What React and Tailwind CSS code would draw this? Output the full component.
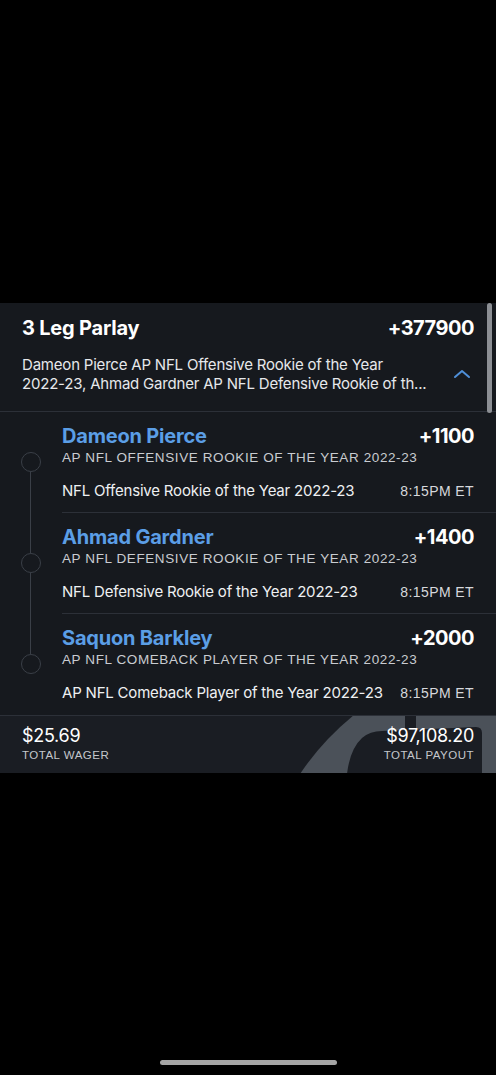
import React from "react";

const legs = [
  {
    name: "Dameon Pierce",
    odds: "+1100",
    market: "AP NFL Offensive Rookie of the Year 2022-23",
    event: "NFL Offensive Rookie of the Year 2022-23",
  },
  {
    name: "Ahmad Gardner",
    odds: "+1400",
    market: "AP NFL Defensive Rookie of the Year 2022-23",
    event: "NFL Defensive Rookie of the Year 2022-23",
  },
  {
    name: "Saquon Barkley",
    odds: "+2000",
    market: "AP NFL Comeback Player of the Year 2022-23",
    event: "AP NFL Comeback Player of the Year 2022-23",
  },
];

const font = { fontFamily: "Inter, 'Open Sans', 'Liberation Sans', sans-serif" };
const caps = { fontFamily: "'Liberation Sans', sans-serif" };

function Leg({ leg, index, last }) {
  return (
    <div className="flex">
      {/* timeline column */}
      <div className="w-[62px] flex flex-col items-center pr-[1px]">
        <div className={`w-px h-[40px] ${index === 0 ? "bg-transparent" : "bg-[#3a3f47]"}`} />
        <div className="w-[20px] h-[20px] rounded-full border border-[#3a3f47]" />
        <div className={`w-px flex-1 ${last ? "bg-transparent" : "bg-[#3a3f47]"}`} />
      </div>

      <div className={`flex-1 pt-[13px] pr-[22px] ${last ? "pb-[12px]" : "pb-[11px] border-b border-[#2c3038]"}`}>
        <div className="flex items-center justify-between h-[22px]">
          <span className="text-[20px] font-bold text-[#5b9ee6] tracking-[-0.2px]">{leg.name}</span>
          <span className="text-[20px] font-bold text-white tracking-[-0.5px]">{leg.odds}</span>
        </div>
        <div className="mt-[1px] h-[20px] flex items-center text-[13.5px] uppercase tracking-[0.6px] text-[#c9ccd1] whitespace-nowrap" style={caps}>
          {leg.market}
        </div>
        <div className="mt-[13px] flex items-center justify-between h-[20px]">
          <span className="text-[15px] text-[#eef0f2] tracking-[-0.2px] whitespace-nowrap">{leg.event}</span>
          <span className="text-[14px] tracking-[0.4px] text-[#d6d8dc]" style={caps}>8:15PM ET</span>
        </div>
      </div>
    </div>
  );
}

export default function App() {
  return (
    <div className="w-[496px] h-[1075px] bg-black flex flex-col relative overflow-hidden" style={font}>
      <div className="h-[303px]" />

      <div className="relative bg-[#16191e]">
        {/* header */}
        <div className="px-[22px] pt-[13px] pb-[18px] border-b border-[#2c3038]">
          <div className="flex items-center justify-between h-[24px]">
            <span className="text-[20px] font-bold text-white tracking-[-0.2px]">3 Leg Parlay</span>
            <span className="text-[20px] font-bold text-white tracking-[-0.5px]">+377900</span>
          </div>
          <div className="mt-[15px] flex items-center justify-between">
            <p className="text-[15px] leading-[19px] text-[#e6e8eb] tracking-[-0.2px] w-[410px]">
              Dameon Pierce AP NFL Offensive Rookie of the Year <span className="whitespace-nowrap">2022-23,</span> Ahmad Gardner AP NFL Defensive Rookie of th...
            </p>
            <svg width="18" height="12" viewBox="0 0 18 12" className="mr-[3px]">
              <polyline points="2,9 9,3 16,9" fill="none" stroke="#4f8fd8" strokeWidth="2" strokeLinecap="round" strokeLinejoin="round" />
            </svg>
          </div>
        </div>

        {/* scrollbar */}
        <div className="absolute right-[4px] top-0 w-[5px] h-[110px] rounded-full bg-[#8c8f94]" />

        {legs.map((leg, i) => (
          <Leg key={leg.name} leg={leg} index={i} last={i === legs.length - 1} />
        ))}

        {/* footer */}
        <div className="relative h-[58px] border-t border-[#2c3038] bg-[#1a1d23] overflow-hidden">
          <svg className="absolute left-0 top-0" width="496" height="58" viewBox="0 715 496 58">
            <path d="M300 773 Q322 740 354 714 L496 714 L496 773 Z" fill="#4b5159" />
            <path d="M347 773 Q350 748 362 737 Q370 730 382 730 L476 726 Q482 726 482 732 L482 773 Z" fill="#1a1d23" />
            <rect x="405" y="714" width="11" height="16" fill="#1a1d23" />
          </svg>
          <div className="relative flex justify-between items-start px-[22px] pt-[9px]">
            <div className="flex flex-col">
              <span className="text-[18px] leading-[22px] text-white tracking-[-0.3px]">$25.69</span>
              <span className="mt-[1px] text-[11.5px] leading-[14px] tracking-[0.5px] text-[#c4c7cc]" style={caps}>TOTAL WAGER</span>
            </div>
            <div className="flex flex-col items-end">
              <span className="text-[18px] leading-[22px] text-white tracking-[-0.3px]">$97,108.20</span>
              <span className="mt-[1px] text-[11.5px] leading-[14px] tracking-[0.5px] text-[#c4c7cc]" style={caps}>TOTAL PAYOUT</span>
            </div>
          </div>
        </div>
      </div>

      <div className="flex-1" />
      <div className="flex justify-center pb-[10px]">
        <div className="w-[177px] h-[5px] rounded-full bg-[#a5a5a5]" />
      </div>
    </div>
  );
}
